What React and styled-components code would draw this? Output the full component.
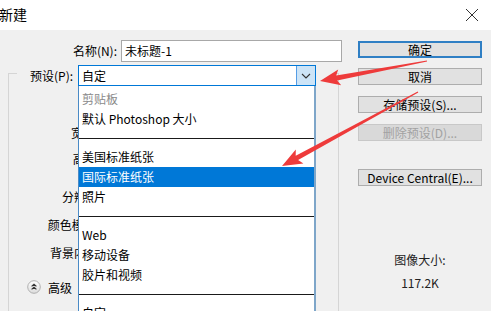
import React from "react";
import styled, { createGlobalStyle } from "styled-components";

const GlobalStyle = createGlobalStyle`
  html, body { margin: 0; padding: 0; background: #f0f0f0; }
  body { font-family: "Noto Sans CJK SC", "Noto Sans", sans-serif; font-size: 12px; color: #000; }
`;

const Dialog = styled.div`
  position: relative;
  width: 491px;
  height: 311px;
  overflow: hidden;
  background: #f0f0f0;
  display: flex;
  flex-direction: column;
`;

const TitleBar = styled.div`
  height: 30px;
  flex: none;
  background: #fff;
  display: flex;
  align-items: center;
  justify-content: space-between;
  padding-right: 12px;
`;

const Title = styled.div`
  font-size: 14px;
  line-height: 16px;
  margin-left: -1px;
  margin-top: -2px;
`;

const CloseIcon = styled.svg`
  width: 14px;
  height: 14px;
  margin-top: -1px;
`;

const Body = styled.div`
  flex: 1;
  display: flex;
  align-items: flex-start;
`;

const FormCol = styled.div`
  width: 350px;
  display: flex;
  flex-direction: column;
`;

const NameRow = styled.div`
  margin-top: 10px;
  height: 22px;
  display: flex;
  align-items: center;
`;

const Label = styled.div`
  width: ${(p) => p.$w}px;
  flex: none;
  text-align: right;
  white-space: nowrap;
  line-height: 16px;
`;

const TextInput = styled.div`
  margin-left: 4px;
  width: 221px;
  height: 22px;
  box-sizing: border-box;
  border: 1px solid #a8a8a8;
  background: #fff;
  padding-left: 3px;
  line-height: 20px;
`;

const Group = styled.div`
  position: relative;
  margin: 11px 0 0 8px;
  width: 331px;
  height: 240px;
  box-sizing: border-box;
  border: 1px solid #d5d5d5;
  border-bottom: none;
`;

const Legend = styled.div`
  margin: -9px 0 0 8px;
  width: 318px;
  height: 21px;
  background: #f0f0f0;
  display: flex;
  align-items: center;
`;

const LegendLabel = styled.div`
  margin-left: 13px;
  width: 43px;
  white-space: nowrap;
  line-height: 16px;
`;

const SelectWrap = styled.div`
  position: relative;
  margin-left: 5px;
  width: 238px;
  height: 21px;
  z-index: 2;
`;

const SelectBox = styled.div`
  height: 21px;
  box-sizing: border-box;
  border: 1px solid #0078d7;
  background: #fff;
  display: flex;
  align-items: stretch;
`;

const SelectText = styled.div`
  flex: 1;
  padding-left: 3px;
  line-height: 19px;
`;

const SelectButton = styled.div`
  width: 18px;
  background: #cce4f7;
  border-left: 1px solid #569de5;
  display: flex;
  align-items: center;
  justify-content: center;
`;

const DropList = styled.div`
  position: absolute;
  top: 21px;
  left: 0;
  width: 238px;
  height: 240px;
  box-sizing: border-box;
  background: #fff;
  border-left: 1px solid #4a8ac6;
  border-right: 2px solid #7ea6c9;
  padding-top: 3px;
  display: flex;
  flex-direction: column;
`;

const Item = styled.div`
  height: 20px;
  flex: none;
  padding-left: 3px;
  line-height: 20px;
  white-space: nowrap;
  color: ${(p) => (p.$active ? "#fff" : p.$muted ? "#8a8a8a" : "#000")};
  background: ${(p) => (p.$active ? "#0078d7" : "transparent")};
`;

const Separator = styled.div`
  height: 18px;
  flex: none;
  display: flex;
  align-items: center;
  &::after {
    content: "";
    display: block;
    width: 100%;
    height: 1px;
    background: #1a1a1a;
  }
`;

const FieldRow = styled.div`
  margin-top: ${(p) => p.$mt}px;
  height: 20px;
  display: flex;
  align-items: center;
`;

const AdvancedRow = styled.div`
  margin-top: ${(p) => p.$mt}px;
  height: 20px;
  display: flex;
  align-items: center;
  padding-left: 18px;
  gap: 7px;
`;

const ButtonCol = styled.div`
  margin-left: 8px;
  width: 124px;
  display: flex;
  flex-direction: column;
  padding-top: 11px;
`;

const Button = styled.div`
  height: 17px;
  margin-top: ${(p) => p.$mt || 0}px;
  box-sizing: border-box;
  border: ${(p) => (p.$primary ? "2px solid #2f7fc4" : "1px solid #adadad")};
  background: ${(p) => (p.$disabled ? "#d9d9d9" : "#e1e1e1")};
  color: ${(p) => (p.$disabled ? "#a2a2a2" : "#000")};
  border-color: ${(p) => (p.$disabled ? "#c8c8c8" : undefined)};
  display: flex;
  align-items: center;
  justify-content: center;
  line-height: 14px;
  white-space: nowrap;
`;

const SizeInfo = styled.div`
  margin-top: 66px;
  display: flex;
  flex-direction: column;
  align-items: center;
  gap: 7px;
  line-height: 16px;
  color: #222;
`;

const ArrowLayer = styled.svg`
  position: absolute;
  left: 0;
  top: 0;
  width: 491px;
  height: 311px;
  pointer-events: none;
  z-index: 10;
`;

const Chevron = () => (
  <svg width="10" height="6" viewBox="0 0 10 6">
    <polyline points="1,1 5,5 9,1" fill="none" stroke="#333" strokeWidth="1.1" />
  </svg>
);

const AdvancedIcon = () => (
  <svg width="14" height="14" viewBox="0 0 14 14">
    <defs>
      <linearGradient id="advg" x1="0" y1="0" x2="0" y2="1">
        <stop offset="0" stopColor="#ffffff" />
        <stop offset="1" stopColor="#dcdcdc" />
      </linearGradient>
    </defs>
    <circle cx="7" cy="7" r="6.3" fill="url(#advg)" stroke="#a9a9a9" strokeWidth="0.9" />
    <polyline points="4.6,6.4 7,4.2 9.4,6.4" fill="none" stroke="#333" strokeWidth="1.2" />
    <polyline points="4.6,9.4 7,7.2 9.4,9.4" fill="none" stroke="#333" strokeWidth="1.2" />
  </svg>
);

const presets = [
  { t: "剪贴板", muted: true },
  { t: "默认 Photoshop 大小" },
  { sep: true },
  { t: "美国标准纸张" },
  { t: "国际标准纸张", active: true },
  { t: "照片" },
  { sep: true },
  { t: "Web" },
  { t: "移动设备" },
  { t: "胶片和视频" },
  { sep: true },
  { t: "自定" },
];

const fields = [
  { t: "宽度(W):", mt: 37 },
  { t: "高度(H):", mt: 6 },
  { t: "分辨率(R):", mt: 18 },
  { t: "颜色模式(M):", mt: 8 },
  { t: "背景内容(C):", mt: 8 },
];

export default function App() {
  return (
    <>
      <GlobalStyle />
      <Dialog>
        <TitleBar>
          <Title>新建</Title>
          <CloseIcon viewBox="0 0 14 14">
            <line x1="1" y1="1" x2="13" y2="13" stroke="#333" strokeWidth="1" />
            <line x1="13" y1="1" x2="1" y2="13" stroke="#333" strokeWidth="1" />
          </CloseIcon>
        </TitleBar>
        <Body>
          <FormCol>
            <NameRow>
              <Label $w={117}>名称(N):</Label>
              <TextInput>未标题-1</TextInput>
            </NameRow>
            <Group>
              <Legend>
                <LegendLabel>预设(P):</LegendLabel>
                <SelectWrap>
                  <SelectBox>
                    <SelectText>自定</SelectText>
                    <SelectButton>
                      <Chevron />
                    </SelectButton>
                  </SelectBox>
                  <DropList>
                    {presets.map((p, i) =>
                      p.sep ? (
                        <Separator key={i} />
                      ) : (
                        <Item key={i} $muted={p.muted} $active={p.active}>
                          {p.t}
                        </Item>
                      )
                    )}
                  </DropList>
                </SelectWrap>
              </Legend>
              {fields.map((f) => (
                <FieldRow key={f.t} $mt={f.mt}>
                  <Label $w={108}>{f.t}</Label>
                </FieldRow>
              ))}
              <AdvancedRow $mt={14}>
                <AdvancedIcon />
                <span>高级</span>
              </AdvancedRow>
            </Group>
          </FormCol>
          <ButtonCol>
            <Button $primary>确定</Button>
            <Button $mt={10}>取消</Button>
            <Button $mt={11}>存储预设(S)...</Button>
            <Button $mt={11} $disabled>删除预设(D)...</Button>
            <Button $mt={28}>Device Central(E)...</Button>
            <SizeInfo>
              <span>图像大小:</span>
              <span>117.2K</span>
            </SizeInfo>
          </ButtonCol>
        </Body>
        <ArrowLayer viewBox="0 0 491 311">
          <polygon
            fill="#ee3b3b"
            points="320,81 338.2,69.4 336.2,75.4 426.9,60.4 427.1,61.6 337.2,80.4 341.2,85.2"
          />
          <polygon
            fill="#ee3b3b"
            points="282,166 295.8,149.4 295.7,155.7 417.7,91.5 418.3,92.5 298.1,160.1 303.4,163.4"
          />
        </ArrowLayer>
      </Dialog>
    </>
  );
}
